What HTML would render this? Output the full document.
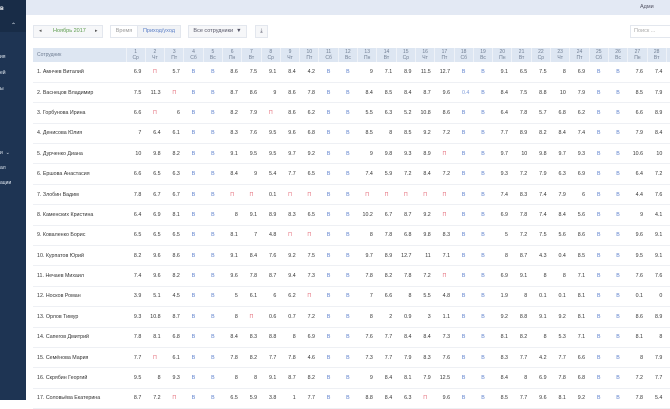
<!DOCTYPE html>
<html><head><meta charset="utf-8">
<style>
*{margin:0;padding:0;box-sizing:border-box}
html,body{width:670px;height:400px;overflow:hidden;background:#fff;font-family:"Liberation Sans",sans-serif;color:#333}
#side{position:absolute;left:0;top:0;width:26px;height:400px;background:#1e3453}
#side .top{position:absolute;left:0;top:0;width:26px;height:32px;background:#182c47}
#side div.t{position:absolute;color:#dfe6ef;font-size:5px;white-space:nowrap}
#bar{position:absolute;left:26px;top:0;width:644px;height:15px;background:#e3e9f4}
.btn{position:absolute;top:25px;height:13px;border:1px solid #e3e7ee;background:#f6f7f9;font-size:5.5px;line-height:11px;color:#555;white-space:nowrap}
table{position:absolute;left:33px;top:48px;border-collapse:collapse;table-layout:fixed;width:672px}
th{background:#dde6f2;color:#6f7d92;font-weight:normal;font-size:5px;line-height:5.5px;height:14px;border-left:1px solid #eef2f8;text-align:center;padding-top:1px}
th.n{text-align:left;padding-left:4px;border-left:none}
td{height:20.4px;font-size:5.3px;text-align:right;padding-right:4px;border-bottom:1px solid #eef0f4;white-space:nowrap}
td.n{text-align:left;padding-left:4px;font-size:5.3px}
td.b{color:#5b7fcc;text-align:center;padding:0}
td.p{color:#e5717e;text-align:center;padding:0}
td.l{color:#7d9ad8}
</style></head><body>
<div id="side"><div class="top"></div>
<div class="t" style="left:0;top:6px;font-weight:bold;font-size:6px;color:#fff">в</div>
<div class="t" style="left:11px;top:22px;font-size:6px">⌃</div>
<div class="t" style="left:0;top:54px">ия</div>
<div class="t" style="left:0;top:70px">ей</div>
<div class="t" style="left:0;top:86px">ы</div>
<div class="t" style="left:0;top:150px">и&nbsp;&nbsp;⌄</div>
<div class="t" style="left:0;top:165px">ал</div>
<div class="t" style="left:0;top:180px">ации</div>
</div>
<div id="bar"><div style="position:absolute;left:614px;top:4px;font-size:5.5px;color:#556">Адми</div></div>

<div class="btn" style="left:33px;width:70px"><span style="position:absolute;left:5px;font-size:5px">◂</span><span style="position:absolute;left:19px;color:#5a9a4a">Ноябрь 2017</span><span style="position:absolute;left:61px;font-size:5px">▸</span></div>
<div class="btn" style="left:110px;width:28px;background:#fff;color:#999;text-align:center">Время</div>
<div class="btn" style="left:137px;width:44px;color:#5b7fc7;text-align:center;background:#f1f3f6">Приход/уход</div>
<div class="btn" style="left:188px;width:59px;text-align:center;color:#556">Все сотрудники &nbsp;▼</div>
<div class="btn" style="left:255px;width:13px;text-align:center;color:#556">⤓</div>
<div class="btn" style="left:630px;width:45px;background:#fff;color:#aaa;padding-left:3px">Поиск ...</div>

<table>
<colgroup><col style="width:93px"><col span="30" style="width:19.3px"></colgroup>
<tr><th class="n">Сотрудник</th><th>1<br>Ср</th><th>2<br>Чт</th><th>3<br>Пт</th><th>4<br>Сб</th><th>5<br>Вс</th><th>6<br>Пн</th><th>7<br>Вт</th><th>8<br>Ср</th><th>9<br>Чт</th><th>10<br>Пт</th><th>11<br>Сб</th><th>12<br>Вс</th><th>13<br>Пн</th><th>14<br>Вт</th><th>15<br>Ср</th><th>16<br>Чт</th><th>17<br>Пт</th><th>18<br>Сб</th><th>19<br>Вс</th><th>20<br>Пн</th><th>21<br>Вт</th><th>22<br>Ср</th><th>23<br>Чт</th><th>24<br>Пт</th><th>25<br>Сб</th><th>26<br>Вс</th><th>27<br>Пн</th><th>28<br>Вт</th><th>29<br>Ср</th><th>30<br>Чт</th></tr>
<tr><td class="n">1. Амнчев Виталий</td><td>6.9</td><td class="p">П</td><td>5.7</td><td class="b">В</td><td class="b">В</td><td>8.6</td><td>7.5</td><td>9.1</td><td>8.4</td><td>4.2</td><td class="b">В</td><td class="b">В</td><td>9</td><td>7.1</td><td>8.9</td><td>11.5</td><td>12.7</td><td class="b">В</td><td class="b">В</td><td>9.1</td><td>6.5</td><td>7.5</td><td>8</td><td>6.9</td><td class="b">В</td><td class="b">В</td><td>7.6</td><td>7.4</td><td>8</td><td>7</td></tr>
<tr><td class="n">2. Васнецов Владимир</td><td>7.5</td><td>11.3</td><td class="p">П</td><td class="b">В</td><td class="b">В</td><td>8.7</td><td>8.6</td><td>9</td><td>8.6</td><td>7.8</td><td class="b">В</td><td class="b">В</td><td>8.4</td><td>8.5</td><td>8.4</td><td>8.7</td><td>9.6</td><td class="l">0.4</td><td class="b">В</td><td>8.4</td><td>7.5</td><td>8.8</td><td>10</td><td>7.9</td><td class="b">В</td><td class="b">В</td><td>8.5</td><td>7.9</td><td>8</td><td>7</td></tr>
<tr><td class="n">3. Горбунова Ирина</td><td>6.6</td><td class="p">П</td><td>6</td><td class="b">В</td><td class="b">В</td><td>8.2</td><td>7.9</td><td class="p">П</td><td>8.6</td><td>6.2</td><td class="b">В</td><td class="b">В</td><td>5.5</td><td>6.3</td><td>5.2</td><td>10.8</td><td>8.6</td><td class="b">В</td><td class="b">В</td><td>6.4</td><td>7.8</td><td>5.7</td><td>6.8</td><td>6.2</td><td class="b">В</td><td class="b">В</td><td>6.6</td><td>8.9</td><td>8</td><td>7</td></tr>
<tr><td class="n">4. Денисова Юлия</td><td>7</td><td>6.4</td><td>6.1</td><td class="b">В</td><td class="b">В</td><td>8.3</td><td>7.6</td><td>9.5</td><td>9.6</td><td>6.8</td><td class="b">В</td><td class="b">В</td><td>8.5</td><td>8</td><td>8.5</td><td>9.2</td><td>7.2</td><td class="b">В</td><td class="b">В</td><td>7.7</td><td>8.9</td><td>8.2</td><td>8.4</td><td>7.4</td><td class="b">В</td><td class="b">В</td><td>7.9</td><td>8.4</td><td>8</td><td>7</td></tr>
<tr><td class="n">5. Дурченко Диана</td><td>10</td><td>9.8</td><td>8.2</td><td class="b">В</td><td class="b">В</td><td>9.1</td><td>9.5</td><td>9.5</td><td>9.7</td><td>9.2</td><td class="b">В</td><td class="b">В</td><td>9</td><td>9.8</td><td>9.3</td><td>8.9</td><td class="p">П</td><td class="b">В</td><td class="b">В</td><td>9.7</td><td>10</td><td>9.8</td><td>9.7</td><td>9.3</td><td class="b">В</td><td class="b">В</td><td>10.6</td><td>10</td><td>8</td><td>7</td></tr>
<tr><td class="n">6. Ершова Анастасия</td><td>6.6</td><td>6.5</td><td>6.3</td><td class="b">В</td><td class="b">В</td><td>8.4</td><td>9</td><td>5.4</td><td>7.7</td><td>6.5</td><td class="b">В</td><td class="b">В</td><td>7.4</td><td>5.9</td><td>7.2</td><td>8.4</td><td>7.2</td><td class="b">В</td><td class="b">В</td><td>9.3</td><td>7.2</td><td>7.9</td><td>6.3</td><td>6.9</td><td class="b">В</td><td class="b">В</td><td>6.4</td><td>7.2</td><td>8</td><td>7</td></tr>
<tr><td class="n">7. Злобин Вадим</td><td>7.8</td><td>6.7</td><td>6.7</td><td class="b">В</td><td class="b">В</td><td class="p">П</td><td class="p">П</td><td>0.1</td><td class="p">П</td><td class="p">П</td><td class="b">В</td><td class="b">В</td><td class="p">П</td><td class="p">П</td><td class="p">П</td><td class="p">П</td><td class="p">П</td><td class="b">В</td><td class="b">В</td><td>7.4</td><td>8.3</td><td>7.4</td><td>7.9</td><td>6</td><td class="b">В</td><td class="b">В</td><td>4.4</td><td>7.6</td><td>8</td><td>7</td></tr>
<tr><td class="n">8. Каменских Кристина</td><td>6.4</td><td>6.9</td><td>8.1</td><td class="b">В</td><td class="b">В</td><td>8</td><td>9.1</td><td>8.9</td><td>8.3</td><td>6.5</td><td class="b">В</td><td class="b">В</td><td>10.2</td><td>6.7</td><td>8.7</td><td>9.2</td><td class="p">П</td><td class="b">В</td><td class="b">В</td><td>6.9</td><td>7.8</td><td>7.4</td><td>8.4</td><td>5.6</td><td class="b">В</td><td class="b">В</td><td>9</td><td>4.1</td><td>8</td><td>7</td></tr>
<tr><td class="n">9. Коваленко Борис</td><td>6.5</td><td>6.5</td><td>6.5</td><td class="b">В</td><td class="b">В</td><td>8.1</td><td>7</td><td>4.8</td><td class="p">П</td><td class="p">П</td><td class="b">В</td><td class="b">В</td><td>8</td><td>7.8</td><td>6.8</td><td>9.8</td><td>8.3</td><td class="b">В</td><td class="b">В</td><td>5</td><td>7.2</td><td>7.5</td><td>5.6</td><td>8.6</td><td class="b">В</td><td class="b">В</td><td>9.6</td><td>9.1</td><td>8</td><td>7</td></tr>
<tr><td class="n">10. Курпатов Юрий</td><td>8.2</td><td>9.6</td><td>8.6</td><td class="b">В</td><td class="b">В</td><td>9.1</td><td>8.4</td><td>7.6</td><td>9.2</td><td>7.5</td><td class="b">В</td><td class="b">В</td><td>9.7</td><td>8.9</td><td>12.7</td><td>11</td><td>7.1</td><td class="b">В</td><td class="b">В</td><td>8</td><td>8.7</td><td>4.3</td><td>0.4</td><td>8.5</td><td class="b">В</td><td class="b">В</td><td>9.5</td><td>9.1</td><td>8</td><td>7</td></tr>
<tr><td class="n">11. Нечаев Михаил</td><td>7.4</td><td>9.6</td><td>8.2</td><td class="b">В</td><td class="b">В</td><td>9.6</td><td>7.8</td><td>8.7</td><td>9.4</td><td>7.3</td><td class="b">В</td><td class="b">В</td><td>7.8</td><td>8.2</td><td>7.8</td><td>7.2</td><td class="p">П</td><td class="b">В</td><td class="b">В</td><td>6.9</td><td>9.1</td><td>8</td><td>8</td><td>7.1</td><td class="b">В</td><td class="b">В</td><td>7.6</td><td>7.6</td><td>8</td><td>7</td></tr>
<tr><td class="n">12. Носков Роман</td><td>3.9</td><td>5.1</td><td>4.5</td><td class="b">В</td><td class="b">В</td><td>5</td><td>6.1</td><td>6</td><td>6.2</td><td class="p">П</td><td class="b">В</td><td class="b">В</td><td>7</td><td>6.6</td><td>8</td><td>5.5</td><td>4.8</td><td class="b">В</td><td class="b">В</td><td>1.9</td><td>8</td><td>0.1</td><td>0.1</td><td>8.1</td><td class="b">В</td><td class="b">В</td><td>0.1</td><td>0</td><td>8</td><td>7</td></tr>
<tr><td class="n">13. Орлов Тимур</td><td>9.3</td><td>10.8</td><td>8.7</td><td class="b">В</td><td class="b">В</td><td>8</td><td class="p">П</td><td>0.6</td><td>0.7</td><td>7.2</td><td class="b">В</td><td class="b">В</td><td>8</td><td>2</td><td>0.9</td><td>3</td><td>1.1</td><td class="b">В</td><td class="b">В</td><td>9.2</td><td>8.8</td><td>9.1</td><td>9.2</td><td>8.1</td><td class="b">В</td><td class="b">В</td><td>8.6</td><td>8.9</td><td>8</td><td>7</td></tr>
<tr><td class="n">14. Сапегов Дмитрий</td><td>7.8</td><td>8.1</td><td>6.8</td><td class="b">В</td><td class="b">В</td><td>8.4</td><td>8.3</td><td>8.8</td><td>8</td><td>6.9</td><td class="b">В</td><td class="b">В</td><td>7.6</td><td>7.7</td><td>8.4</td><td>8.4</td><td>7.3</td><td class="b">В</td><td class="b">В</td><td>8.1</td><td>8.2</td><td>8</td><td>5.3</td><td>7.1</td><td class="b">В</td><td class="b">В</td><td>8.1</td><td>8</td><td>8</td><td>7</td></tr>
<tr><td class="n">15. Семёнова Мария</td><td>7.7</td><td class="p">П</td><td>6.1</td><td class="b">В</td><td class="b">В</td><td>7.8</td><td>8.2</td><td>7.7</td><td>7.8</td><td>4.6</td><td class="b">В</td><td class="b">В</td><td>7.3</td><td>7.7</td><td>7.9</td><td>8.3</td><td>7.6</td><td class="b">В</td><td class="b">В</td><td>8.3</td><td>7.7</td><td>4.2</td><td>7.7</td><td>6.6</td><td class="b">В</td><td class="b">В</td><td>8</td><td>7.9</td><td>8</td><td>7</td></tr>
<tr><td class="n">16. Скрябин Георгий</td><td>9.5</td><td>8</td><td>9.3</td><td class="b">В</td><td class="b">В</td><td>8</td><td>8</td><td>9.1</td><td>8.7</td><td>8.2</td><td class="b">В</td><td class="b">В</td><td>9</td><td>8.4</td><td>8.1</td><td>7.9</td><td>12.5</td><td class="b">В</td><td class="b">В</td><td>8.4</td><td>8</td><td>6.9</td><td>7.8</td><td>6.8</td><td class="b">В</td><td class="b">В</td><td>7.2</td><td>7.7</td><td>8</td><td>7</td></tr>
<tr><td class="n">17. Соловьёва Екатерина</td><td>8.7</td><td>7.2</td><td class="p">П</td><td class="b">В</td><td class="b">В</td><td>6.5</td><td>5.9</td><td>3.8</td><td>1</td><td>7.7</td><td class="b">В</td><td class="b">В</td><td>8.8</td><td>8.4</td><td>6.3</td><td class="p">П</td><td>9.6</td><td class="b">В</td><td class="b">В</td><td>8.5</td><td>7.7</td><td>9.6</td><td>8.1</td><td>9.2</td><td class="b">В</td><td class="b">В</td><td>7.8</td><td>5.4</td><td>8</td><td>7</td></tr>
</table>
</body></html>
